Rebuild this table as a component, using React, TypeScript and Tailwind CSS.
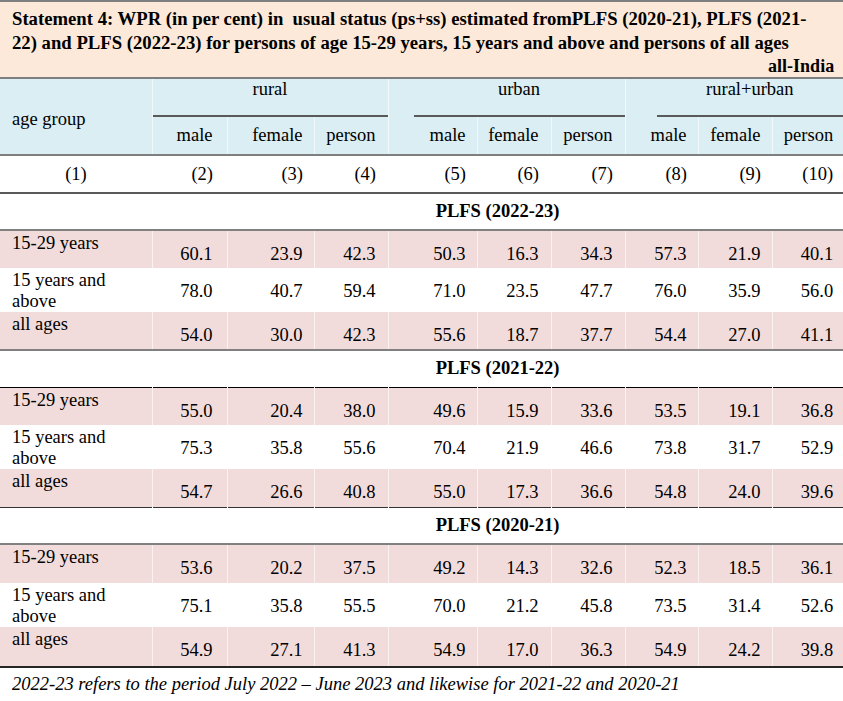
import React from 'react';

type Row = { label: string[]; values: string[]; shade: boolean };
type Section = { title: string; top: string; bottom: string; tall: boolean; rows: Row[] };

const makeRows = (a: string, b: string, c: string): Row[] => [
  { label: ['15-29 years'], values: a.split(' '), shade: true },
  { label: ['15 years and', 'above'], values: b.split(' '), shade: false },
  { label: ['all ages'], values: c.split(' '), shade: true },
];

const sections: Section[] = [
  {
    title: 'PLFS (2022-23)',
    top: 'border-t-2 border-t-[#595959]',
    bottom: 'border-b-2 border-b-[#808080]',
    tall: false,
    rows: makeRows(
      '60.1 23.9 42.3 50.3 16.3 34.3 57.3 21.9 40.1',
      '78.0 40.7 59.4 71.0 23.5 47.7 76.0 35.9 56.0',
      '54.0 30.0 42.3 55.6 18.7 37.7 54.4 27.0 41.1'
    ),
  },
  {
    title: 'PLFS (2021-22)',
    top: 'border-t-2 border-t-[#808080]',
    bottom: 'border-b border-b-black',
    tall: false,
    rows: makeRows(
      '55.0 20.4 38.0 49.6 15.9 33.6 53.5 19.1 36.8',
      '75.3 35.8 55.6 70.4 21.9 46.6 73.8 31.7 52.9',
      '54.7 26.6 40.8 55.0 17.3 36.6 54.8 24.0 39.6'
    ),
  },
  {
    title: 'PLFS (2020-21)',
    top: 'border-t border-t-[#333333]',
    bottom: 'border-b-2 border-b-[#808080]',
    tall: true,
    rows: makeRows(
      '53.6 20.2 37.5 49.2 14.3 32.6 52.3 18.5 36.1',
      '75.1 35.8 55.5 70.0 21.2 45.8 73.5 31.4 52.6',
      '54.9 27.1 41.3 54.9 17.0 36.3 54.9 24.2 39.8'
    ),
  },
];

const sub = ['male', 'female', 'person', 'male', 'female', 'person', 'male', 'female', 'person'];
// column 2 sits a little further from its right edge than the rest
const padR = ['pr-[14px]', 'pr-[11px]', 'pr-3', 'pr-[11px]', 'pr-3', 'pr-3', 'pr-[11px]', 'pr-[11px]', 'pr-[10px]'];
const sep = 'border-l border-l-white/60';

export default function App() {
  return (
    <div className="w-[843px] h-[701px] bg-white text-black font-['Liberation_Serif',serif] text-[18.5px] leading-[21px] overflow-hidden">
      <table className="w-[843px] table-fixed border-collapse">
        <colgroup>
          <col className="w-[152px]" />
          <col className="w-[75px]" />
          <col className="w-[87px]" />
          <col className="w-[74px]" />
          <col className="w-[89px]" />
          <col className="w-[74px]" />
          <col className="w-[74px]" />
          <col className="w-[73px]" />
          <col className="w-[74px]" />
          <col className="w-[71px]" />
        </colgroup>
        <tbody>
          {/* title band */}
          <tr className="border-t-2 border-t-[#7f7f7f] border-b-2 border-b-[#7f7f7f]">
            <td colSpan={10} className="bg-[#fde9d9] h-[75px] p-0 align-top">
              <div className="pl-3 pr-[9px] pt-[5px] font-bold text-[18.7px] leading-[24px] whitespace-pre">
                {'Statement 4: WPR (in per cent) in  usual status (ps+ss) estimated fromPLFS (2020-21), PLFS (2021-\n22) and PLFS (2022-23) for persons of age 15-29 years, 15 years and above and persons of all ages'}
                <div className="text-right text-[18px] leading-[22px]">all-India</div>
              </div>
            </td>
          </tr>

          {/* group header */}
          <tr className="bg-[#daeef3]">
            <td rowSpan={2} className="pl-3 pt-[6px] align-middle">age group</td>
            <td colSpan={3} className={`p-0 align-top ${sep}`}>
              <div className="h-[38px] text-center border-b-2 border-b-[#595959]">rural</div>
            </td>
            <td colSpan={3} className={`p-0 align-top ${sep}`}>
              <div className="h-[38px] ml-[25px] text-center border-b-2 border-b-[#595959]">urban</div>
            </td>
            <td colSpan={3} className={`p-0 align-top ${sep}`}>
              <div className="h-[38px] ml-[31px] text-center border-b-2 border-b-[#595959]">rural+urban</div>
            </td>
          </tr>
          <tr className="bg-[#daeef3] h-[38px] border-b-2 border-b-[#7f7f7f]">
            {sub.map((s, i) => (
              <td key={i} className={`text-right align-middle ${padR[i]} ${sep}`}>
                {s}
              </td>
            ))}
          </tr>

          {/* column numbers */}
          <tr className="h-[38px]">
            <td className="text-center align-middle">(1)</td>
            {padR.map((p, i) => (
              <td key={i} className={`text-right align-middle ${p}`}>
                ({i + 2})
              </td>
            ))}
          </tr>

          {sections.map((sec) => (
            <React.Fragment key={sec.title}>
              <tr className={`h-[37px] ${sec.top} ${sec.bottom}`}>
                <td />
                <td colSpan={9} className="text-center align-middle font-bold">
                  {sec.title}
                </td>
              </tr>
              {sec.rows.map((r, ri) => (
                <tr
                  key={ri}
                  className={`${r.shade ? 'bg-[#f2dcdb]' : 'bg-white'} ${
                    ri === 1 ? 'h-[43px]' : sec.tall ? 'h-[39px]' : 'h-[38px]'
                  }`}
                >
                  <td className="pl-3 pt-[2px] align-top">
                    {r.label.map((l) => (
                      <div key={l}>{l}</div>
                    ))}
                  </td>
                  {r.values.map((v, vi) => (
                    <td key={vi} className={`text-right align-top pt-[13px] ${padR[vi]} ${sep}`}>
                      {v}
                    </td>
                  ))}
                </tr>
              ))}
            </React.Fragment>
          ))}
        </tbody>
      </table>
      <div className="border-t-2 border-t-[#262626] h-[34px] pl-3 flex items-center italic">
        2022-23 refers to the period July 2022 – June 2023 and likewise for 2021-22 and 2020-21
      </div>
    </div>
  );
}
